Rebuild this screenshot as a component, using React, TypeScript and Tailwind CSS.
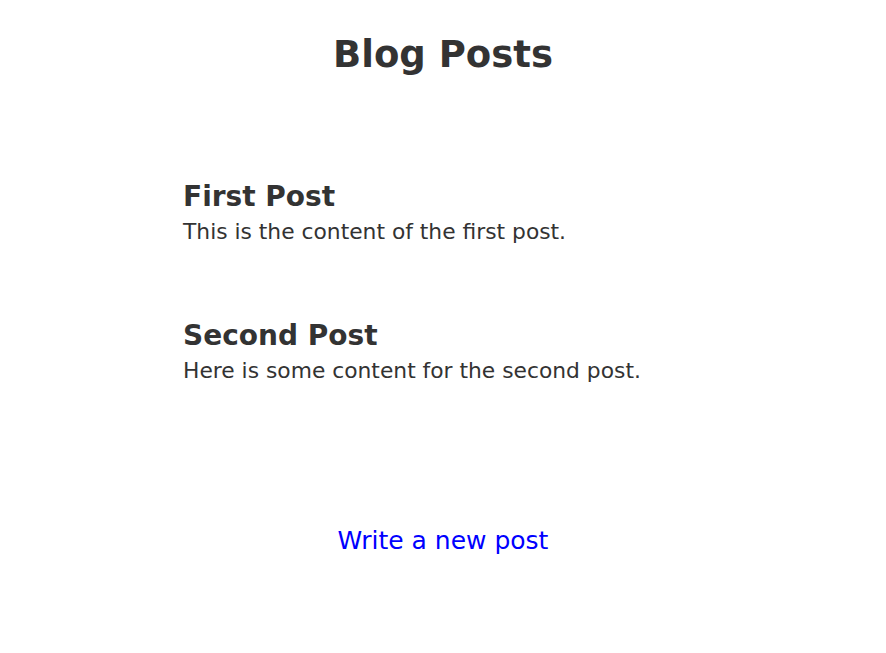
export default function App() {
  const posts = [
    { title: "First Post", content: "This is the content of the first post." },
    { title: "Second Post", content: "Here is some content for the second post." },
  ];
  return (
    <div
      className="min-h-[653px] bg-white text-[#333333] flex flex-col items-center"
      style={{ fontFamily: '"DejaVu Sans", sans-serif' }}
    >
      <h1 className="mt-[33px] text-[37px] font-bold leading-[44px]">Blog Posts</h1>
      <div className="w-[520px] mt-[103px] flex flex-col gap-[74px]">
        {posts.map((p) => (
          <div key={p.title} className="flex flex-col gap-[5px]">
            <h2 className="text-[28px] font-bold leading-[34px]">{p.title}</h2>
            <p className="text-[21.8px] leading-[26px]">{p.content}</p>
          </div>
        ))}
      </div>
      <a href="#" className="mt-[142px] text-[25px] leading-[30px] text-[#0000ff]">
        Write a new post
      </a>
    </div>
  );
}
